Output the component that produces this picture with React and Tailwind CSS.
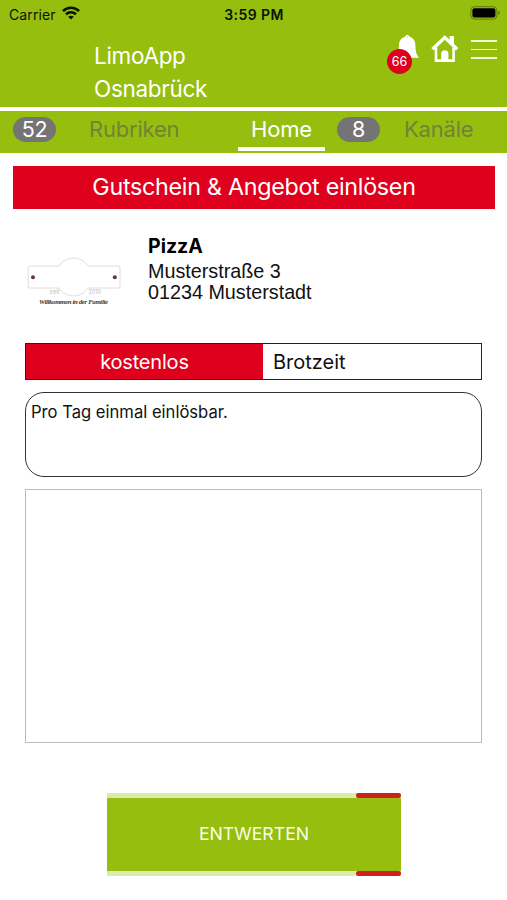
const WifiIcon = () => (
  <svg className="mb-[2px] ml-[6px] h-[14px] w-[18px]" viewBox="0 0 18 14" fill="none" stroke="#0c1200" strokeWidth="2.6">
    <path d="M1 5.1C5.5 0.6 12.5 0.6 17 5.1" />
    <path d="M4 8.3C6.8 5.6 11.2 5.6 14 8.3" />
    <path d="M9 13.6L6.2 10.8C7.8 9.3 10.2 9.3 11.8 10.8Z" fill="#0c1200" stroke="none" />
  </svg>
);

const BatteryIcon = () => (
  <svg className="mb-[2px] h-[14px] w-[31px]" viewBox="0 0 31 14">
    <rect x="0.9" y="0.7" width="26" height="12.4" rx="3.5" fill="none" stroke="#5f7b08" strokeWidth="1" />
    <rect x="2.4" y="2.3" width="23" height="9.3" rx="2" fill="#000" />
    <path d="M28.3 4.8C30.3 5.4 30.3 8.4 28.3 9Z" fill="#5f7b08" />
  </svg>
);

const BellIcon = () => (
  <svg className="h-[24px] w-[24px]" viewBox="0 0 24 24" fill="#fff">
    <path d="M10.2 1.8C10.4 -0.5 14.2 -0.5 14.4 1.8C18.6 3 20.2 6 20.4 10.5C20.6 16 21 19 24 22.7H1.5C4.3 19 3.8 15 3.9 10.5C4.1 6 6 3 10.2 1.8Z" />
    <circle cx="12.3" cy="2" r="0.6" fill="#96be0f" />
  </svg>
);

const HomeIcon = () => (
  <svg className="h-[28px] w-[28px]" viewBox="0 0 28 28" fill="none" stroke="#fff">
    <path d="M1.4 14.2L13.8 2.6L26.2 14.2" strokeWidth="3.4" />
    <path d="M5 12.5V25.6H22.6V12.5" strokeWidth="2.6" />
    <path d="M18.6 1H23V9.8L18.6 6Z" fill="#fff" stroke="none" />
    <path d="M10.2 25.5V18.5C10.2 14.3 17.4 14.3 17.4 18.5V25.5Z" fill="#fff" stroke="none" />
  </svg>
);

const PartnerLogo = () => (
  <svg className="h-[52px] w-[94px]" viewBox="0 0 94 52">
    <path
      d="M3 9H32C39 -1.5 54 -1.5 61 9H91.5Q93 9 93 11V29Q93 31 91.5 31H61C54 41.5 39 41.5 32 31H3Q1.2 31 1.2 29V11Q1.2 9 3 9Z"
      fill="#fff"
      stroke="#dedede"
      strokeWidth="1"
    />
    <circle cx="6" cy="20.2" r="2" fill="#653443" />
    <circle cx="87.8" cy="20.2" r="2" fill="#653443" />
    <text x="22.5" y="36.5" fontSize="6" fill="#bbb" fontFamily="Inter, sans-serif">seit</text>
    <text x="61.5" y="36.5" fontSize="5.5" fill="#bbb" fontFamily="Inter, sans-serif">2010</text>
    <text x="12" y="47" fontSize="6.8" fontWeight="bold" fontStyle="italic" fill="#3a3a3a" fontFamily="'Liberation Serif', serif" textLength="69">
      Willkommen in der Familie
    </text>
  </svg>
);

const CountBadge = ({ count }) => (
  <span className="flex h-[25px] w-[43px] items-center justify-center rounded-full bg-[#747474] text-[21.5px] tracking-[-0.3px] text-white">
    {count}
  </span>
);

const ButtonStripe = () => (
  <div className="flex h-[5px]">
    <div className="flex-1 bg-[#d9ebb0]" />
    <div className="w-[45px] rounded-[2px] bg-[#d0201b]" />
  </div>
);

const Header = () => (
  <header className="h-[107px] bg-[#96be0f]">
    <div className="grid h-7 grid-cols-3 items-center pr-[6px] pl-[9px] text-[#0c1200]">
      <div className="flex items-center text-[14px] tracking-[0.1px]">
        Carrier
        <WifiIcon />
      </div>
      <div className="pr-[2px] text-center text-[14px] font-semibold tracking-[0.4px]">3:59 PM</div>
      <div className="flex justify-end">
        <BatteryIcon />
      </div>
    </div>
    <div className="flex justify-between pr-[10px] pl-[94px] text-white">
      <h1 className="pt-3 text-[22.5px] leading-[32.5px] tracking-[-0.3px]">
        LimoApp
        <br />
        Osnabrück
      </h1>
      <div className="flex items-start pt-[7px]">
        <div className="relative mr-[12px]">
          <BellIcon />
          <span className="absolute top-[14px] -left-[8px] flex h-[25px] w-[25px] items-center justify-center rounded-full bg-[#df001d] pt-px text-[12.5px] leading-none">
            66
          </span>
        </div>
        <HomeIcon />
        <div className="mt-[5px] ml-[12px] flex w-[26px] flex-col gap-[7px]">
          <div className="h-[1.5px] bg-[#f3f9dc]" />
          <div className="h-[1.5px] bg-[#f3f9dc]" />
          <div className="h-[1.5px] bg-[#f3f9dc]" />
        </div>
      </div>
    </div>
  </header>
);

const TabBar = () => (
  <nav className="mt-1 flex h-[42px] items-start bg-[#96be0f] pt-[6px] pl-[13px] text-[22px] leading-[25px] tracking-[-0.2px] text-[#748238]">
    <CountBadge count={52} />
    <span className="ml-[33px] w-[149px]">Rubriken</span>
    <span className="h-[34px] w-[87px] border-b-[4px] border-white text-center text-white">Home</span>
    <span className="ml-[12px]">
      <CountBadge count={8} />
    </span>
    <span className="ml-[24px]">Kanäle</span>
  </nav>
);

export default function App() {
  return (
    <div className="h-[900px] w-[507px] overflow-hidden bg-white font-[Inter,sans-serif] text-[#111]">
      <Header />
      <TabBar />
      <main>
        <h2 className="mr-[12px] ml-[13px] mt-[13px] flex h-[43px] items-center justify-center bg-[#df001d] text-[23.3px] tracking-[-0.29px] text-white">
          Gutschein &amp; Angebot einlösen
        </h2>

        <section className="mt-[25px] flex h-[109px] pl-[27px]">
          <div className="w-[121px] pt-[23px]">
            <PartnerLogo />
          </div>
          <div className="font-['Liberation_Sans',sans-serif] text-[19.75px] leading-[21px]">
            <h3 className="mb-[3px] font-[Inter,sans-serif] text-[19.5px] leading-6 font-bold text-black">PizzA</h3>
            <p>Musterstraße 3</p>
            <p>01234 Musterstadt</p>
          </div>
        </section>

        <div className="mx-[25px] flex h-[37px] border border-[#222] text-[20px] leading-[36px]">
          <div className="w-[237px] bg-[#df001d] text-center tracking-[-0.2px] text-white">kostenlos</div>
          <div className="pl-[10px]">Brotzeit</div>
        </div>
        <p className="mx-[25px] mt-[12px] h-[85px] rounded-[19px] border border-[#333] px-[5px] pt-[9px] text-[16.6px] leading-[20px]">
          Pro Tag einmal einlösbar.
        </p>
        <div className="mx-[25px] mt-[12px] h-[254px] border border-[#bbb]" />

        <button className="ml-[107px] mt-[50px] block w-[294px]">
          <ButtonStripe />
          <span className="flex h-[73px] items-center justify-center bg-[#96be0f] text-[17.7px] text-[#f8fde6]">
            ENTWERTEN
          </span>
          <ButtonStripe />
        </button>
      </main>
    </div>
  );
}
